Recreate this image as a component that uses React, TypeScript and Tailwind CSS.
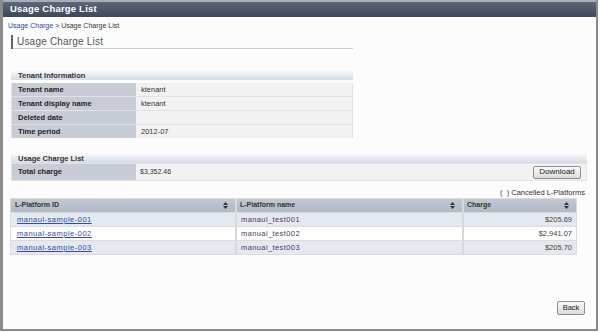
const tenantRows = [
  { label: "Tenant name", value: "ktenant" },
  { label: "Tenant display name", value: "ktenant" },
  { label: "Deleted date", value: "" },
  { label: "Time period", value: "2012-07" },
];

const platforms = [
  { id: "manaul-sample-001", name: "manaul_test001", charge: "$205.69" },
  { id: "manual-sample-002", name: "manual_test002", charge: "$2,941.07" },
  { id: "manual-sample-003", name: "manual_test003", charge: "$205.70" },
];

function SortIcon() {
  return (
    <svg width="5" height="7" viewBox="0 0 5 7" className="shrink-0">
      <path d="M2.5 0 L5 3 L0 3 Z" fill="#333" />
      <path d="M2.5 7 L5 4 L0 4 Z" fill="#333" />
    </svg>
  );
}

function SectionHeader({ title }: { title: string }) {
  return (
    <div className="h-[9px] flex items-center pl-[7px] bg-gradient-to-b from-[#f6f7f9] to-[#d6dce5] text-[7.5px] leading-[9px] font-bold text-[#333]">
      {title}
    </div>
  );
}

export default function App() {
  return (
    <div className="w-[600px] h-[332px] bg-white font-['Liberation_Sans',sans-serif] text-[#333]">
      <div className="w-[598px] h-[331px] flex flex-col border-l-[3px] border-r-2 border-b-2 border-[#8c8c8c] bg-[#fcfcfc]">
        {/* title bar */}
        <div className="h-[17px] shrink-0 flex items-center pl-[7px] border-t-2 border-[#a9adb5] bg-gradient-to-b from-[#5e677a] to-[#3f485a] text-white text-[9.5px] font-bold tracking-[0.2px]">
          Usage Charge List
        </div>

        <div className="flex-1 flex flex-col pl-[5px] pr-[8px]">
          {/* breadcrumb */}
          <div className="mt-[3px] h-[12px] flex items-center text-[7px]">
            <span className="text-[#2a4ab0]">Usage Charge</span>
            <span className="ml-[2px] text-[#333]">&gt; Usage Charge List</span>
          </div>

          {/* page heading */}
          <div className="mt-[3px] ml-[3px] w-[342px] flex items-center h-[14px] border-b border-[#cfcfc8]">
            <div className="w-[2px] h-[14px] bg-[#5b6478]" />
            <span className="ml-[4px] text-[10px] text-[#555] tracking-[0.2px]">Usage Charge List</span>
          </div>

          {/* tenant information */}
          <div className="mt-[22px] ml-[3px] w-[342px] flex flex-col">
            <SectionHeader title="Tenant Information" />
            <div className="mt-[3px] flex flex-col gap-px bg-[#e2e2e2] border-x border-[#e2e2e2]">
              {tenantRows.map((r) => (
                <div key={r.label} className="flex h-[13px]">
                  <div className="w-[124px] bg-[#c7ccd6] pl-[6px] flex items-center text-[7.5px] font-bold text-[#222]">
                    {r.label}
                  </div>
                  <div className="flex-1 bg-[#f2f2f2] pl-[5px] flex items-center text-[7.5px] text-[#333]">
                    {r.value}
                  </div>
                </div>
              ))}
            </div>
          </div>

          {/* usage charge list */}
          <div className="mt-[16px] ml-[3px] w-[576px] flex flex-col">
            <SectionHeader title="Usage Charge List" />
            <div className="flex h-[18px] border border-[#e2e2e2]">
              <div className="w-[124px] bg-[#c7ccd6] pl-[6px] flex items-center text-[7.5px] font-bold text-[#222]">
                Total charge
              </div>
              <div className="flex-1 bg-[#f2f2f2] pl-[4px] pr-[5px] flex items-center justify-between text-[7px] text-[#333]">
                <span>$3,352.46</span>
                <button className="w-[48px] h-[13px] border border-[#8e8e8e] rounded-[2px] bg-gradient-to-b from-[#fafafa] to-[#dcdcdc] text-[8px] text-[#222] leading-none">
                  Download
                </button>
              </div>
            </div>
          </div>

          <div className="mt-[7px] w-[577px] h-[10px] leading-[10px] text-right text-[7.5px] text-[#333]">
            (&nbsp; ) Cancelled L-Platforms
          </div>

          {/* platform table */}
          <div className="ml-[2px] w-[567px] flex flex-col border border-[#dcdcdc]">
            <div className="flex h-[13px] bg-gradient-to-b from-[#c2c8d2] to-[#b2b9c5] text-[7px] font-bold text-[#333]">
              <div className="w-[226px] flex items-center justify-between pl-[4px] pr-[7px] border-r-2 border-[#d6d9de]">
                L-Platform ID <SortIcon />
              </div>
              <div className="w-[227px] flex items-center justify-between pl-[3px] pr-[7px] border-r-2 border-[#d6d9de]">
                L-Platform name <SortIcon />
              </div>
              <div className="flex-1 flex items-center justify-between pl-[3px] pr-[7px]">
                Charge <SortIcon />
              </div>
            </div>
            {platforms.map((p, i) => (
              <div
                key={p.id}
                className={`flex h-[14px] border-t border-[#d8dbe0] ${i % 2 === 0 ? "bg-[#e4e8ef]" : "bg-white"}`}
              >
                <div className="w-[226px] flex items-center pl-[6px] border-r-2 border-[#d6d9de] text-[7.5px] tracking-[0.5px]">
                  <span className="text-[#3048b8] underline">{p.id}</span>
                </div>
                <div className="w-[227px] flex items-center pl-[4px] border-r-2 border-[#d6d9de] text-[7.5px] tracking-[0.4px] text-[#4a3866]">
                  {p.name}
                </div>
                <div className="flex-1 flex items-center justify-end pr-[4px] text-[7.5px] text-[#444]">{p.charge}</div>
              </div>
            ))}
          </div>

          <div className="flex-1" />
          <div className="flex justify-end pr-[3px] mb-[14px]">
            <button className="w-[28px] h-[14px] border border-[#8e8e8e] rounded-[2px] bg-gradient-to-b from-[#fafafa] to-[#dcdcdc] text-[7.5px] text-[#222] leading-none">
              Back
            </button>
          </div>
        </div>
      </div>
    </div>
  );
}
